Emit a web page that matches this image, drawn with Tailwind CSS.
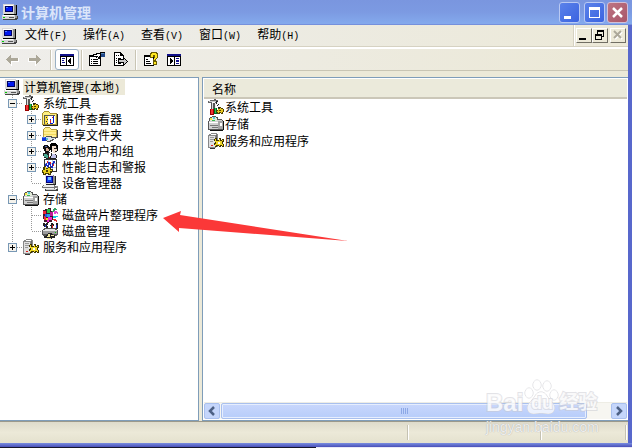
<!DOCTYPE html>
<html lang="zh-CN">
<head>
    <meta charset="UTF-8">
    <meta name="viewport" content="width=device-width, initial-scale=1.0">
    <title>计算机管理</title>
    <script src="https://cdn.jsdelivr.net/npm/@tailwindcss/browser@4"></script>
</head>
<body class="relative flex flex-col h-screen overflow-hidden bg-[#ece9d8] text-black text-[12px] leading-4 font-['Noto_Sans_CJK_SC',sans-serif]">

    <!-- Icons -->
    <svg class="hidden" shape-rendering="crispEdges">
        <symbol id="computer" viewBox="0 0 16 16">
            <path d="M1 0h11v1h2v10H2v-1H1z" fill="#555"/>
            <path d="M14 1h1v10h-1zM2 10h12v1H2z" fill="#000"/>
            <path d="M1 0h11v10H1z" fill="#d8d8d8"/>
            <path d="M2 1h9v1H2z" fill="#fff"/>
            <path d="M12 1h2v9h-2z" fill="#8c8c8c"/>
            <path d="M3 2h8v6H3z" fill="#000060"/>
            <path d="M4 3h6v4H4z" fill="#0018f0"/>
            <path d="M4 3h2v1H4z" fill="#5080ff"/>
            <path d="M0 11h15v1h1v3h-1v1H1v-1H0z" fill="#444"/>
            <path d="M0 11h13v4H0z" fill="#d4d4d4"/>
            <path d="M1 11h11v1H1z" fill="#fff"/>
            <path d="M7 13h5v1H7z" fill="#555"/>
            <path d="M1 13h2v1H1z" fill="#0c0"/>
            <path d="M13 11h2v3h-2z" fill="#999"/>
        </symbol>
        <symbol id="tools" viewBox="0 0 16 16">
            <path d="M0 2h2V1h4V0h2v1h2v2H8v1H7V3H4v1H0z" fill="#666"/>
            <path d="M1 2h7v1H1z" fill="#ccc"/>
            <path d="M3 4h3v6H3z" fill="#555"/>
            <path d="M4 4h1v6H4z" fill="#ddd"/>
            <path d="M2 10h4v6H2z" fill="#900"/>
            <path d="M3 10h2v5H3z" fill="#f03030"/>
            <path d="M6 4h2v6H6z" fill="#555"/>
            <path d="M7 4h1v5H7z" fill="#eee"/>
            <path d="M6 9h3v6H6z" fill="#006a20"/>
            <path d="M7 9h1v5H7z" fill="#20c050"/>
            <path d="M8 2h2v3h1v3h1v2h-2V7H9V5H8z" fill="#222"/>
            <path d="M9 3h1v3H9zM10 6h1v2h-1z" fill="#f4f4f4"/>
            <path d="M11 9h1V8h1v1h2v1h1v3h-1v2h-2v-1h-1v1H9v-2H8v-2h2V9z" fill="#4d4000"/>
            <path d="M12 9h1v1h2v3h-1v1h-1v-1h-2v1h-1v-1H9v-1h1v-2h2z" fill="#e8c820"/>
            <path d="M11 11h2v1h-2z" fill="#4d4000"/>
        </symbol>
        <symbol id="events" viewBox="0 0 16 16">
            <path d="M0 2h1V1h1V0h5v1h1v1h7v12H0z" fill="#a89030"/>
            <path d="M1 2h1V1h5v1h1v1h6v10H1z" fill="#ffef80"/>
            <path d="M15 3h1v12H1v-1h14z" fill="#222"/>
            <path d="M2 4h11v9H2z" fill="#555"/>
            <path d="M3 5h10v8H3z" fill="#fff"/>
            <path d="M3 5h3v8H3z" fill="#ffe040"/>
            <path d="M4 6h1v1H4zM5 8h1v1H5zM4 10h1v1H4zM5 12h1v1H5z" fill="#333"/>
            <path d="M8 8h1v5H8zM11 5h1v7h-1zM9 12h2v1H9z" fill="#0020d0"/>
            <path d="M8 9h1v3H8z" fill="#e02020"/>
            <path d="M10 6h1v1h-1z" fill="#e02020"/>
        </symbol>
        <symbol id="share" viewBox="0 0 16 16">
            <path d="M1 2h1V1h1V0h5v1h1v1h6v8H1z" fill="#b8a040"/>
            <path d="M2 2h1V1h5v1h1v1h5v7H2z" fill="#ffef90"/>
            <path d="M15 3h1v8h-3v-1h2z" fill="#444"/>
            <path d="M2 4h12v1H2zM2 7h12v1H2z" fill="#f2da60"/>
            <path d="M0 10h4v4H0z" fill="#1038d8"/>
            <path d="M0 10h3v1H0z" fill="#5080f0"/>
            <path d="M4 9h6v1h4v2h-2v1h-1v1h-2v1H5v-1H4z" fill="#555"/>
            <path d="M4 10h5v1h4v1h-3v1H8v1H5v-1H4z" fill="#dce6ee"/>
            <path d="M4 11h2v2H4z" fill="#58c0d0"/>
        </symbol>
        <symbol id="users" viewBox="0 0 16 16">
            <path d="M9 0h5v1h1v1h1v6h-1V5h-1V3h-3v3h-1v3H9V7H7V5H6V4h2V1h1z" fill="#000"/>
            <path d="M10 3h4v3h1v2h-1v2h-3V8h-1z" fill="#f0dccc"/>
            <path d="M14 4h1v2h-1zM12 5h2v1h-2zM13 8h2v1h-2z" fill="#222"/>
            <path d="M1 3h1V2h4v1h1v2h1v3H7v2H3V8H2V6H1z" fill="#101010"/>
            <path d="M4 5h2v1h1v2H4z" fill="#d8ad98"/>
            <path d="M3 3h2v1H3z" fill="#5060b0"/>
            <path d="M1 10h5V9h2v1h2v1h4v1h1v3h-1v1H4v-1H2v-2H1z" fill="#202020"/>
            <path d="M2 11h3v1h1v3H4v-1H2z" fill="#48a890"/>
            <path d="M7 10h2v3H8v1H7z" fill="#fff"/>
            <path d="M10 11h3v1h1v3H9v-2h1z" fill="#c4c4ec"/>
            <path d="M7 14h1v1H7z" fill="#d02020"/>
        </symbol>
        <symbol id="perf" viewBox="0 0 16 16">
            <path d="M2 0h13v13H2z" fill="#333"/>
            <path d="M3 1h11v11H3z" fill="#fff"/>
            <path d="M6 1h1v11H6zM10 1h1v11h-1zM3 4h11v1H3zM3 8h11v1H3z" fill="#b8cce8"/>
            <path d="M3 5h1V4h1v2h1V3h2v2h1v2h1V4h1V2h2v2h-1v3h-1v2H9V8H8V6H7v2H5V7H3z" fill="#1828c0"/>
            <path d="M5 2h1v2H5zM8 3h1v2H8zM11 5h1v2h-1z" fill="#e02020"/>
            <path d="M1 8h2V7h1v2h2V8h3v2h2v2h-1v2H9v2H6v-1H4v1H1v-2H0v-3h1z" fill="#463c00"/>
            <path d="M3 8h1v2h2V9h2v2h2v1H8v3H7v-1H3v1H2v-2H1v-2h2z" fill="#e8d020"/>
            <path d="M4 11h2v2H4z" fill="#463c00"/>
        </symbol>
        <symbol id="device" viewBox="0 0 16 16">
            <path d="M3 0h9v1h1v8H3z" fill="#888"/>
            <path d="M3 0h8v9H3z" fill="#e4e4e4"/>
            <path d="M13 1h1v9H4V9h9z" fill="#222"/>
            <path d="M4 1h7v7H4z" fill="#000080"/>
            <path d="M5 2h5v5H5z" fill="#1040f0"/>
            <path d="M6 2h3v3H6z" fill="#70b8ff"/>
            <path d="M1 10h12v1h1v2h-1v1H1v-1H0v-2h1z" fill="#777"/>
            <path d="M2 10h10v2H1v-1h1zM1 13h11v1H1z" fill="#eee"/>
            <path d="M3 14h13v2H3z" fill="#444"/>
            <path d="M4 14h10v1H4z" fill="#ccc"/>
            <path d="M14 11h2v3h-1v-1h-1z" fill="#888"/>
        </symbol>
        <symbol id="storage" viewBox="0 0 16 16">
            <path d="M1 2h1V1h2V0h4v1h2v2h4v1h1v1h1v9h-2v1H2v-1H0V5h1z" fill="#555"/>
            <path d="M2 2h2V1h4v1h1v3H2z" fill="#e0ead8"/>
            <path d="M2 2h2v2H2z" fill="#f0e840"/>
            <path d="M5 1h2v2H5z" fill="#50d0d8"/>
            <path d="M4 4h3v1H4z" fill="#38b850"/>
            <path d="M9 4h5v1H9zM1 5h9v8H1z" fill="#d0d0d0"/>
            <path d="M1 6h9v1H1z" fill="#fff"/>
            <path d="M10 5h5v8h-5z" fill="#a4a4a4"/>
            <path d="M2 9h8v1H2zM4 11h6v1H4z" fill="#777"/>
            <path d="M12 7h2v3h-2z" fill="#fff"/>
            <path d="M2 14h13v1H2zM15 5h1v9h-1z" fill="#111"/>
        </symbol>
        <symbol id="defrag" viewBox="0 0 16 16">
            <path d="M1 3h2V2h3V1h3v3h2v9h-1v2H7v1H5v-1H2v-3H1z" fill="#40182c"/>
            <path d="M1 4h3v3H1zM2 9h2v4H2z" fill="#f02838"/>
            <path d="M5 2h3v4H5z" fill="#28c048"/>
            <path d="M3 7h2v3H3z" fill="#2850e0"/>
            <path d="M5 7h3v3H5z" fill="#28a0e0"/>
            <path d="M6 10h4v3H7v2H5v-4h1z" fill="#f028d0"/>
            <path d="M8 5h3v4H8z" fill="#c01898"/>
            <path d="M4 11h2v2H4z" fill="#e8d828"/>
            <path d="M11 2h1V1h2v1h1v1h-2v1h-1v1h-2V4h1z" fill="#30a060"/>
            <path d="M12 4h3v1h1v2h-1V6h-1v1h-2z" fill="#e048d0"/>
            <path d="M11 9h5v1h-2v1h-3z" fill="#18c8e8"/>
            <path d="M11 12h3v1h1v2h-1v-1h-2v-1h-1z" fill="#e03030"/>
        </symbol>
        <symbol id="diskmgmt" viewBox="0 0 16 16">
            <path d="M1 0h2v1h1V0h2v2H5v1h1v3H4V4H2V3H1zM9 0h2v1h1v2h-1v3H9V3H8V2h1zM14 0h2v6h-2z" fill="#222"/>
            <path d="M10 2h1v3h-1z" fill="#d02020"/>
            <path d="M14 2h1v3h-1zM3 2h1v2H3z" fill="#2038d0"/>
            <path d="M2 5h12v1h1v1h1v5h-1v1H1v-1H0V7h1V6h1z" fill="#555"/>
            <path d="M3 6h10v1h2v1H1V7h2z" fill="#e4e4e4"/>
            <path d="M1 8h14v3H1z" fill="#9c9c9c"/>
            <path d="M13 9h1v1h-1z" fill="#0c0"/>
            <path d="M2 13h2v-1h1v-1h1v-1h4v1h1v1h2v3h-3v1H5v-1H2z" fill="#222"/>
            <path d="M6 11h2v3H5v-1h1zM9 12h3v1H9zM5 15h4v1H5z" fill="#f0e8a0"/>
        </symbol>
        <symbol id="services" viewBox="0 0 16 16">
            <path d="M1 1h2V0h6v1h1v13H8v1H6v1H2v-1H0V2h1z" fill="#888"/>
            <path d="M1 3h6v11H1z" fill="#e0e0e0"/>
            <path d="M3 1h5v1H3z" fill="#fff"/>
            <path d="M8 2h1v11H8z" fill="#666"/>
            <path d="M2 4h4v1H2zM2 6h4v1H2zM2 8h3v1H2z" fill="#999"/>
            <path d="M3 12h2v1H3z" fill="#e02020"/>
            <path d="M2 15h5v1H2z" fill="#333"/>
            <path d="M7 5h2v2h2V5h2v2h1V6h2v3h-1v2h1v3h-2v-1h-1v1h-2v-1H9v1H7v-2H6v-2h1V8H6V6h1z" fill="#403600"/>
            <path d="M7 6h1v2h3V6h1v2h2V7h1v1h-1v3h1v2h-1v-1h-2v1h-1v-1H8v1H7v-2h1V9H7z" fill="#f0d828"/>
            <path d="M10 9h2v2h-2z" fill="#fff"/>
        </symbol>

        <!-- Tree connectors -->
        <symbol id="trunk" viewBox="0 0 19 16">
            <path d="M9.500 0V16" stroke="#999" stroke-dasharray="1 1"/>
        </symbol>
        <symbol id="tee" viewBox="0 0 19 16">
            <path d="M9.500 0V16M10 8.500H19" stroke="#999" stroke-dasharray="1 1"/>
        </symbol>
        <symbol id="ell" viewBox="0 0 19 16">
            <path d="M9.500 0V8M10 8.500H19" stroke="#999" stroke-dasharray="1 1"/>
        </symbol>
        <symbol id="minus" viewBox="0 0 9 9">
            <path d="M.5.5h8v8h-8z" fill="#f4f2ec" stroke="#7898b5"/>
            <path d="M2 4.500h5" stroke="#000"/>
        </symbol>
        <symbol id="plus" viewBox="0 0 9 9">
            <path d="M.5.5h8v8h-8z" fill="#f4f2ec" stroke="#7898b5"/>
            <path d="M2 4.500h5M4.500 2v5" stroke="#000"/>
        </symbol>
        <symbol id="back" viewBox="0 0 14 12">
            <path d="M6 4h8v4H7v4H6z" fill="#fff"/>
            <path d="M5 1h1v3h7v3H6v3H5V9H4V8H3V7H2V6H1V5h1V4h1V3h1V2h1z" fill="#aca899"/>
        </symbol>
    </svg>

    <!-- Title bar -->
    <header class="flex items-center h-[25px] shrink-0 pl-[2px] pr-1 bg-linear-to-b from-[#7a96df] via-[#7c9ae2] to-[#84aaed] border-b border-[#7590dc]">
        <svg class="size-4"><use href="#computer"/></svg>
        <h1 class="ml-[3px] flex-1 text-[14px] font-bold text-[#dbe5fa]">计算机管理</h1>
        <div class="flex gap-[2px]">
            <button aria-label="最小化" class="size-[21px] rounded-[3px] border border-[#b9c9f3] bg-linear-to-br from-[#5b82ea] to-[#3b63e0]">
                <svg class="size-[19px]" viewBox="0 0 19 19"><path d="M4 13h7v3H4z" fill="#fff"/></svg>
            </button>
            <button aria-label="最大化" class="ml-[2px] size-[21px] rounded-[3px] border border-[#b9c9f3] bg-linear-to-br from-[#5b82ea] to-[#3b63e0]">
                <svg class="size-[19px]" viewBox="0 0 19 19"><path d="M4 4h11v11H4zM5 7v7h9V7z" fill="#fff" fill-rule="evenodd"/></svg>
            </button>
            <button aria-label="关闭" class="size-[21px] rounded-[3px] border border-[#d3bfd6] bg-linear-to-br from-[#bd7482] to-[#a9566a]">
                <svg class="size-[19px]" viewBox="0 0 19 19"><path d="M5 5l9 9M14 5l-9 9" stroke="#fff" stroke-width="2.500"/></svg>
            </button>
        </div>
    </header>

    <div class="flex flex-col flex-1 min-h-0 border-r-4 border-[#5868cc]">
        <!-- Menu bar -->
        <div class="flex h-6 shrink-0 bg-linear-to-r from-[#ededeb] to-[#ece9d8] border-b-2 border-white">
            <nav class="flex flex-1 items-center pl-[1px] border-b border-[#d6d2c2]">
                <svg class="size-4 mr-2"><use href="#computer"/></svg>
                <div class="flex gap-4">
                    <button>文件<span class="text-[10px] font-['Liberation_Mono',monospace]">(F)</span></button>
                    <button>操作<span class="text-[10px] font-['Liberation_Mono',monospace]">(A)</span></button>
                    <button>查看<span class="text-[10px] font-['Liberation_Mono',monospace]">(V)</span></button>
                    <button>窗口<span class="text-[10px] font-['Liberation_Mono',monospace]">(W)</span></button>
                    <button>帮助<span class="text-[10px] font-['Liberation_Mono',monospace]">(H)</span></button>
                </div>
            </nav>
            <div class="flex items-start pt-[3px] pl-[2px] pr-[2px] border-l border-[#d6d2c2] shadow-[inset_1px_0_#fff] border-b border-b-[#d6d2c2]">
                <button aria-label="最小化窗口" class="w-4 h-[15px] border border-t-white border-l-white border-r-[#716f64] border-b-[#716f64] bg-[#ece9d8]">
                    <svg class="w-[14px] h-[13px]" viewBox="0 0 14 13"><path d="M2 9h7v2H2z"/></svg>
                </button>
                <button aria-label="还原窗口" class="w-4 h-[15px] border border-t-white border-l-white border-r-[#716f64] border-b-[#716f64] bg-[#ece9d8]">
                    <svg class="w-[14px] h-[13px]" viewBox="0 0 14 13" shape-rendering="crispEdges"><path d="M4 1h7v7H9V7h1V3H5v2H4zM2 5h7v6H2zM3 7v3h5V7z" fill-rule="evenodd"/></svg>
                </button>
                <button aria-label="关闭窗口" disabled class="ml-[2px] w-4 h-[15px] border border-t-white border-l-white border-r-[#716f64] border-b-[#716f64] bg-[#ece9d8]">
                    <svg class="w-[14px] h-[13px]" viewBox="0 0 14 13"><path d="M4 3l7 7M11 3l-7 7" stroke="#fff" stroke-width="2"/><path d="M3 2l7 7M10 2l-7 7" stroke="#aca899" stroke-width="2"/></svg>
                </button>
            </div>
        </div>

        <!-- Toolbar -->
        <div class="flex items-center h-[22px] shrink-0 pl-[5px] bg-linear-to-r from-[#efeeeb] to-[#ebe8d6] border-b border-[#c9c5b4]">
            <button aria-label="后退" disabled><svg class="w-[14px] h-3 block" shape-rendering="crispEdges"><use href="#back"/></svg></button>
            <button aria-label="前进" disabled class="ml-[9px]"><svg class="w-[14px] h-3 block -scale-x-100" shape-rendering="crispEdges"><use href="#back"/></svg></button>
            <div class="ml-2 mr-[3px] w-[2px] h-5 bg-[#c9c5b4] border-r border-white"></div>
            <button aria-label="显示/隐藏控制台树" class="flex items-center justify-center w-6 h-[21px] rounded-[3px] border border-[#9ab0c4] bg-white">
                <svg class="w-[14px] h-3" viewBox="0 0 14 12" shape-rendering="crispEdges">
                    <path d="M0 0h14v12H0z"/>
                    <path d="M0 0h14v2H0z" fill="#10108a"/>
                    <path d="M1 3h5v8H1zM7 3h6v8H7z" fill="#fff"/>
                    <path d="M2 4h3v1H2zM2 6h2v1H2zM2 8h3v1H2z" fill="#10108a"/>
                    <path d="M11 4v6h-1V9H9V8H8V6h1V5h1V4z"/>
                </svg>
            </button>
            <div class="mx-[2px] w-[2px] h-5 bg-[#c9c5b4] border-r border-white"></div>
            <button aria-label="属性" class="ml-1">
                <svg class="w-4 h-[15px] block" viewBox="0 0 16 15" shape-rendering="crispEdges">
                    <path d="M0 3h12v11H0z"/>
                    <path d="M1 5h10v8H1z" fill="#fff"/>
                    <path d="M2 7h1v1H2zM4 7h5v1H4zM2 9h1v1H2zM4 9h5v1H4zM2 11h1v1H2zM4 11h5v1H4z"/>
                    <path d="M4 2h3V1h4V0h5v5h-4v1h-1v1H9V5H8v1H7V5H5V4H4z"/>
                    <path d="M5 3h3V2h3v2h-1v1H9V4H5z" fill="#fff"/>
                    <path d="M12 1h4v4h-4z" fill="#204888"/>
                    <path d="M12 1h3v1h-3z" fill="#5888b8"/>
                </svg>
            </button>
            <button aria-label="导出列表" class="ml-[9px]">
                <svg class="w-[15px] h-[15px] block" viewBox="0 0 15 15" shape-rendering="crispEdges">
                    <path d="M0 0h7v1h1v1h1v1h1v11H0z"/>
                    <path d="M1 1h5v3h3v9H1z" fill="#fff"/>
                    <path d="M2 3h1v1H2zM4 3h1v1H4zM2 6h1v1H2zM4 6h3v1H4zM2 8h1v1H2zM2 10h1v1H2zM4 11h3v1H4z"/>
                    <path d="M4 7h5V5h1v1h1v1h1v1h1v1h1v1h-1v1h-1v1h-1v1h-1v1H9v-3H4z"/>
                    <path d="M5 8h5V7h1v1h1v1h1v1h-1v1h-1v1h-1v-2H5z" fill="#c8c8c8"/>
                </svg>
            </button>
            <div class="mx-[6px] w-[2px] h-5 bg-[#c9c5b4] border-r border-white"></div>
            <button aria-label="帮助主题" class="ml-[1px]">
                <svg class="w-[15px] h-[15px] block" viewBox="0 0 15 15" shape-rendering="crispEdges">
                    <path d="M0 3h10v11H0z"/>
                    <path d="M1 5h8v8H1z" fill="#fff"/>
                    <path d="M2 7h2v1H2zM2 9h4v1H2zM2 11h5v1H2z"/>
                    <path d="M6 1h1V0h6v1h1v5h-1v1h-1v2h1v4H9V9h0V7h1V5H9v1H6z" fill="#6b5d00"/>
                    <path d="M7 2h1V1h4v1h1v4h-1v1h-1v1h-1V6h1V3H9v2H7zM10 10h2v2h-2z" fill="#ffe820"/>
                </svg>
            </button>
            <button aria-label="显示/隐藏操作窗格" class="ml-2">
                <svg class="w-[14px] h-3 block" viewBox="0 0 14 12" shape-rendering="crispEdges">
                    <path d="M0 0h14v12H0z"/>
                    <path d="M0 0h14v2H0z" fill="#10108a"/>
                    <path d="M1 3h6v8H1zM8 3h5v8H8z" fill="#fff"/>
                    <path d="M3 4v6h1V9h1V8h1V6H5V5H4V4z"/>
                    <path d="M9 4h3v1H9zM9 6h3v2H9zM9 9h3v1H9z" fill="#10108a"/>
                </svg>
            </button>
        </div>

        <!-- Panes -->
        <main class="flex flex-1 min-h-0 mt-[6px] gap-[3px]">
            <aside class="w-[199px] shrink-0 pt-[1px] bg-white border-t border-r border-b border-[#7f9db9] whitespace-nowrap overflow-hidden">
                <div class="flex h-4 pl-1">
                    <svg class="size-4 mr-[3px]"><use href="#computer"/></svg>
                    <span class="pl-[1px] pr-[5px] bg-[#ece9d8]">计算机管理<span class="text-[10px] font-['Liberation_Mono',monospace]">(</span>本地<span class="text-[10px] font-['Liberation_Mono',monospace]">)</span></span>
                </div>
                <ul id="tree"></ul>
            </aside>

            <section class="flex flex-col flex-1 min-w-0 p-[1px] pt-0 bg-white border border-r-0 border-[#7f9db9]">
                <table class="w-full border-collapse">
                    <thead>
                        <tr class="h-[21px] bg-[#ebeadb] shadow-[inset_0_-2px_#cbc7b8,inset_0_1px_#fff]">
                            <th class="pl-2 text-left font-normal">名称</th>
                        </tr>
                    </thead>
                    <tbody>
                        <tr><td class="pl-1 pb-[1px]"><div class="flex h-4"><svg class="size-4 mr-[1px]"><use href="#tools"/></svg>系统工具</div></td></tr>
                        <tr><td class="pl-1 pb-[1px]"><div class="flex h-4"><svg class="size-4 mr-[1px]"><use href="#storage"/></svg>存储</div></td></tr>
                        <tr><td class="pl-1 pb-[1px]"><div class="flex h-4"><svg class="size-4 mr-[1px]"><use href="#services"/></svg>服务和应用程序</div></td></tr>
                    </tbody>
                </table>
                <div class="mt-auto flex h-[17px] bg-[#f7f6f1] border-t border-[#eeede5]">
                    <button aria-label="向左滚动" class="w-4 rounded-[2px] border border-[#a9c0ee] bg-[#c5d6fb]">
                        <svg class="size-[14px]" viewBox="0 0 14 14"><path d="M9 3L5 7l4 4" fill="none" stroke="#4d6185" stroke-width="2.500"/></svg>
                    </button>
                    <div class="ml-[1px] flex flex-1 items-center justify-center gap-[1px] rounded-[2px] border border-[#a9c0ee] bg-linear-to-b from-[#c9d7fc] to-[#b7cdfa] shadow-[inset_0_0_0_1px_#e6eefe]">
                        <i class="w-[1px] h-[6px] bg-[#8ca8e6]"></i>
                        <i class="w-[1px] h-[6px] bg-[#8ca8e6]"></i>
                        <i class="w-[1px] h-[6px] bg-[#8ca8e6]"></i>
                        <i class="w-[1px] h-[6px] bg-[#8ca8e6]"></i>
                    </div>
                    <button aria-label="向右滚动" class="ml-6 w-4 rounded-[2px] border border-[#a9c0ee] bg-[#c5d6fb]">
                        <svg class="size-[14px]" viewBox="0 0 14 14"><path d="M5 3l4 4-4 4" fill="none" stroke="#4d6185" stroke-width="2.500"/></svg>
                    </button>
                </div>
            </section>
        </main>

        <!-- Status bar -->
        <footer class="flex h-[22px] shrink-0 py-[3px] bg-linear-to-b from-[#dedbcb] via-[#ece9d8] to-[#e4e1ce] border-t border-[#9b998b]">
            <div class="flex-1 border-r border-white shadow-[inset_-1px_0_#c5c2b2]"></div>
            <div class="w-[133px] border-r border-white shadow-[inset_-1px_0_#c5c2b2]"></div>
            <div class="w-[85px] mr-[1px] border-r border-white shadow-[inset_-1px_0_#c5c2b2]"></div>
        </footer>
    </div>
    <div class="h-1 shrink-0 bg-linear-to-b from-[#7a8de0] to-[#4a4fb8]"></div>
    <div class="h-[1px] shrink-0 bg-linear-to-r from-[#16162c] from-50% to-[#e8e8f6] to-50%"></div>

    <!-- Arrow pointing at the defragmenter -->
    <svg class="absolute left-[163px] top-[210px] w-[186px] h-8 pointer-events-none" viewBox="0 0 186 32">
        <path d="M0 8L18 1l-1 4 168 26L16 18l0 4z" fill="#fb3838"/>
    </svg>

    <!-- Watermark -->
    <div class="absolute right-[34px] bottom-[13px] w-[112px] pointer-events-none font-['Liberation_Sans','Noto_Sans_CJK_SC',sans-serif] text-white/80 whitespace-nowrap">
        <div class="relative flex items-end h-10 pb-1 font-bold [paint-order:stroke_fill] [-webkit-text-stroke:2px_#c8c8d080]">
            <span class="text-[24px] leading-6">Bai</span>
            <svg class="w-9 h-9 shrink-0" viewBox="0 0 36 36" fill="#fff" fill-opacity=".7" stroke="#d8d8dc">
                <ellipse cx="14" cy="6" rx="4" ry="5"/>
                <ellipse cx="24" cy="7" rx="4" ry="5"/>
                <ellipse cx="6" cy="14" rx="4" ry="5"/>
                <ellipse cx="31" cy="16" rx="4" ry="5"/>
                <path d="M18 13c5 0 6 5 9 8 4 4 6 8 3 12-3 3-8 1-12 1s-9 2-12-1c-3-4-1-8 3-12 3-3 4-8 9-8z"/>
            </svg>
            <span class="absolute left-[45px] bottom-1 text-[18px] leading-6">du</span>
            <span class="text-[19px] leading-6">经验</span>
        </div>
        <div class="text-[14px] leading-4 [text-shadow:0_0_1px_#999]">jingyan.baidu.com</div>
    </div>

    <script>
        // cells are the connector columns in front of the icon
        const nodes = [
            { cells: ["tee"], box: "minus", icon: "tools", text: "系统工具" },
            { cells: ["trunk", "tee"], box: "plus", icon: "events", text: "事件查看器" },
            { cells: ["trunk", "tee"], box: "plus", icon: "share", text: "共享文件夹" },
            { cells: ["trunk", "tee"], box: "plus", icon: "users", text: "本地用户和组" },
            { cells: ["trunk", "tee"], box: "plus", icon: "perf", text: "性能日志和警报" },
            { cells: ["trunk", "ell"], icon: "device", text: "设备管理器" },
            { cells: ["tee"], box: "minus", icon: "storage", text: "存储" },
            { cells: ["trunk", "tee"], icon: "defrag", text: "磁盘碎片整理程序" },
            { cells: ["trunk", "ell"], icon: "diskmgmt", text: "磁盘管理" },
            { cells: ["ell"], box: "plus", icon: "services", text: "服务和应用程序" }
        ]

        document.getElementById("tree").innerHTML = nodes.map(node => {
            const cells = node.cells.map((cell, i) => {
                const last = i === node.cells.length - 1
                const box = last && node.box
                    ? `<button aria-label="${node.text}" aria-expanded="${node.box === "minus"}" class="absolute left-[5px] top-1"><svg class="size-[9px] block" shape-rendering="crispEdges"><use href="#${node.box}"/></svg></button>`
                    : ""
                return `<span class="relative w-[19px] h-4"><svg class="w-[19px] h-4 block" shape-rendering="crispEdges"><use href="#${cell}"/></svg>${box}</span>`
            }).join("")
            return `<li class="flex h-4 pl-[3px]">${cells}<svg class="size-4 ml-[1px] mr-1"><use href="#${node.icon}"/></svg>${node.text}</li>`
        }).join("")
    </script>
</body>
</html>
